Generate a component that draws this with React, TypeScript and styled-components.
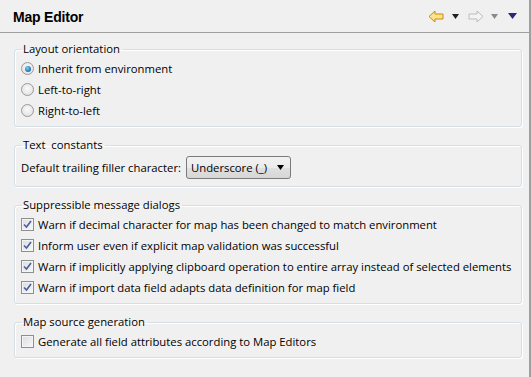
import styled, { createGlobalStyle } from 'styled-components'
import { ReactElement } from 'react'

const GlobalStyle = createGlobalStyle`
  html, body {
    margin: 0;
    padding: 0;
    background: #f0f0f0;
  }
  body {
    font-family: "Open Sans", "Liberation Sans", sans-serif;
    font-size: 11.3px;
    color: #000;
  }
`

const Page = styled.div`
  width: 529px;
  height: 377px;
  background: #f0f0f0;
  border-right: 2px solid #a0a0a0;
  box-sizing: content-box;
`

const Header = styled.div`
  height: 33px;
  border-bottom: 1px solid #a0a0a0;
  display: flex;
  align-items: center;
  justify-content: space-between;
  padding: 0 12px 0 13px;
  box-sizing: border-box;
`

const Title = styled.h1`
  margin: 0;
  font-family: "Liberation Sans", sans-serif;
  font-size: 14px;
  font-weight: bold;
  letter-spacing: -0.2px;
  margin-top: 1px;
`

const Toolbar = styled.div`
  display: flex;
  align-items: center;
`

const Spacer = styled.span<{ $w: number }>`
  width: ${p => p.$w}px;
`

const Body = styled.div`
  padding: 8px 7px 0 14px;
  display: flex;
  flex-direction: column;
  gap: 10px;
`

const Group = styled.fieldset`
  margin: 0;
  padding: 1px 8px 5px 6px;
  border: 1px solid #d5dfe5;
  border-radius: 3px;
  box-shadow: inset 1px 1px 0 #fff, 1px 1px 0 #fff;
  display: flex;
  flex-direction: column;
`

const Legend = styled.legend`
  padding: 0 2px 0 1px;
  margin-left: 1px;
  line-height: 16px;
`

const OptionRow = styled.label`
  display: flex;
  align-items: center;
  gap: 4px;
  height: 21px;
  white-space: nowrap;
`

const Radio = styled.span<{ $checked?: boolean }>`
  width: 11px;
  height: 11px;
  border-radius: 50%;
  border: 1px solid #9a9a9a;
  background: radial-gradient(circle at 50% 40%, #fafafa, #dcdcdc);
  display: flex;
  align-items: center;
  justify-content: center;
  flex: none;
  &::after {
    content: '';
    display: ${p => (p.$checked ? 'block' : 'none')};
    width: 6px;
    height: 6px;
    border-radius: 50%;
    background: radial-gradient(circle at 40% 35%, #7fd0f5, #1a6fb0 70%, #0d4b80);
  }
`

const CheckBox = styled.span`
  width: 11px;
  height: 11px;
  border: 1px solid #8f8f8f;
  background: linear-gradient(135deg, #d9dde2, #f8f8f8);
  box-shadow: inset 0 0 0 1px #f4f4f4;
  display: flex;
  align-items: center;
  justify-content: center;
  flex: none;
`

const FieldRow = styled.div`
  display: flex;
  align-items: center;
  gap: 5px;
  height: 28px;
  margin-top: -1px;
`

const Combo = styled.div`
  width: 105px;
  height: 23px;
  box-sizing: border-box;
  border: 1px solid #7a7a7a;
  border-radius: 3px;
  background: linear-gradient(#f2f2f2 0%, #ebebeb 50%, #e0e0e0 51%, #d6d6d6 100%);
  display: flex;
  align-items: center;
  justify-content: space-between;
  padding: 0 6px 0 4px;
`

function Check (): ReactElement {
  return (
    <CheckBox>
      <svg width='9' height='9' viewBox='0 0 9 9'>
        <path d='M1 4.5 L3.5 7 L8 1' fill='none' stroke='#4a5f97' strokeWidth='1.6' />
      </svg>
    </CheckBox>
  )
}

function DropArrow ({ color, w = 7 }: { color: string, w?: number }): ReactElement {
  return (
    <svg width={w} height={Math.ceil(w / 2) + 1} viewBox={`0 0 ${w} ${Math.ceil(w / 2) + 1}`}>
      <path d={`M0 0 H${w} L${w / 2} ${Math.ceil(w / 2) + 1} Z`} fill={color} />
    </svg>
  )
}

function BackArrow (): ReactElement {
  return (
    <svg width='16' height='13' viewBox='0 0 16 13'>
      <path d='M1 6.5 L7 1 V4 H15 V9 H7 V12 Z' fill='#fde38a' stroke='#c98a10' strokeWidth='1' strokeLinejoin='round' />
    </svg>
  )
}

function ForwardArrow (): ReactElement {
  return (
    <svg width='16' height='13' viewBox='0 0 16 13'>
      <path d='M15 6.5 L9 1 V4 H1 V9 H9 V12 Z' fill='#f4f4f4' stroke='#bcbcbc' strokeWidth='1' strokeLinejoin='round' />
    </svg>
  )
}

const checks = [
  'Warn if decimal character for map has been changed to match environment',
  'Inform user even if explicit map validation was successful',
  'Warn if implicitly applying clipboard operation to entire array instead of selected elements',
  'Warn if import data field adapts data definition for map field'
]

export default function App (): ReactElement {
  return (
    <>
      <GlobalStyle />
      <Page>
        <Header>
          <Title>Map Editor</Title>
          <Toolbar>
            <BackArrow />
            <Spacer $w={8} />
            <DropArrow color='#202020' />
            <Spacer $w={9} />
            <ForwardArrow />
            <Spacer $w={7} />
            <DropArrow color='#8a8a8a' />
            <Spacer $w={10} />
            <DropArrow color='#3c1f78' w={9} />
          </Toolbar>
        </Header>
        <Body>
          <Group>
            <Legend>Layout orientation</Legend>
            <OptionRow><Radio $checked />Inherit from environment</OptionRow>
            <OptionRow><Radio />Left-to-right</OptionRow>
            <OptionRow><Radio />Right-to-left</OptionRow>
          </Group>
          <Group>
            <Legend>Text&nbsp; constants</Legend>
            <FieldRow>
              Default trailing filler character:
              <Combo>Underscore (_)<DropArrow color='#000' /></Combo>
            </FieldRow>
          </Group>
          <Group>
            <Legend>Suppressible message dialogs</Legend>
            {checks.map(c => <OptionRow key={c}><Check />{c}</OptionRow>)}
          </Group>
          <Group>
            <Legend>Map source generation</Legend>
            <OptionRow><CheckBox />Generate all field attributes according to Map Editors</OptionRow>
          </Group>
        </Body>
      </Page>
    </>
  )
}
